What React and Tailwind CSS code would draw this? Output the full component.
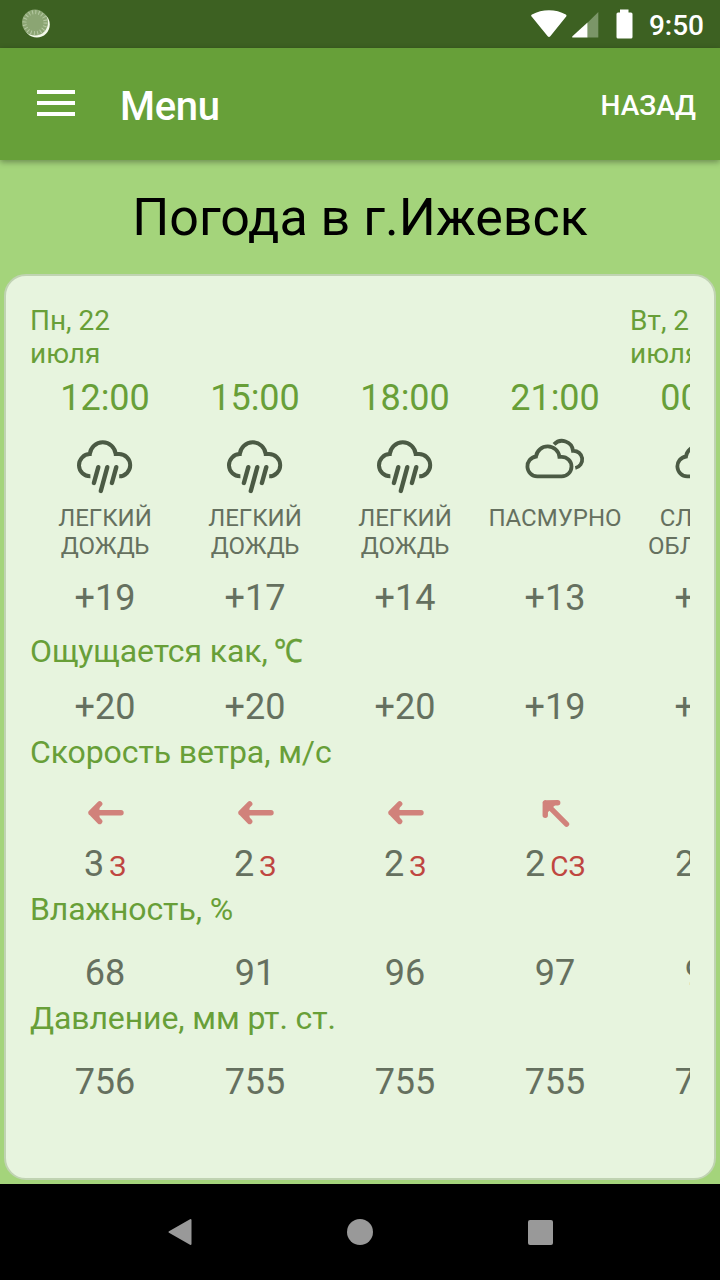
import React from "react";

const forecast = [
  { day: "Пн, 22 июля", time: "12:00", icon: "rain", desc: "ЛЕГКИЙ ДОЖДЬ", temp: "+19", feels: "+20", wind: 3, dir: "З", humidity: 68, pressure: 756 },
  { time: "15:00", icon: "rain", desc: "ЛЕГКИЙ ДОЖДЬ", temp: "+17", feels: "+20", wind: 2, dir: "З", humidity: 91, pressure: 755 },
  { time: "18:00", icon: "rain", desc: "ЛЕГКИЙ ДОЖДЬ", temp: "+14", feels: "+20", wind: 2, dir: "З", humidity: 96, pressure: 755 },
  { time: "21:00", icon: "clouds", desc: "ПАСМУРНО", temp: "+13", feels: "+19", wind: 2, dir: "СЗ", humidity: 97, pressure: 755 },
  { day: "Вт, 23 июля", time: "00:00", icon: "clouds", desc: "СЛЕГКА ОБЛАЧНО", temp: "+12", feels: "+18", wind: 2, dir: "СЗ", humidity: 97, pressure: 755 },
];

const RainIcon = () => (
  <svg width="64" height="64" viewBox="0 0 64 64" fill="none" stroke="#4b5a44" strokeWidth="4" strokeLinecap="round">
    <path strokeLinecap="butt" d="M17.4 42.3A11.1 11.1 0 0 1 16.8 20.1A13 13 0 0 1 42.7 20.1H46A11.1 11.1 0 0 1 46.2 42.3" />
    <path strokeWidth="4.4" d="M25.3 33.2L20.9 49M34.3 33.2L27.8 57M43.3 33.2L38.9 49" />
  </svg>
);

const CloudsIcon = () => (
  <svg width="64" height="64" viewBox="0 0 64 64" fill="none" stroke="#4b5a44" strokeWidth="3.8">
    <path d="M14.2 42.4A10 10 0 0 1 13 22.5A11.8 11.8 0 0 1 36.4 22.8H38.7A9.8 9.8 0 0 1 38.7 42.4Z" />
    <path d="M31 10.4A11 11 0 0 1 50 16.8A8.7 8.7 0 0 1 52.3 34" />
  </svg>
);

const WindArrow = ({ dir }) => (
  <svg
    width="40"
    height="40"
    viewBox="0 0 40 40"
    fill="none"
    stroke="#d1827b"
    strokeWidth="5.4"
    strokeLinecap="round"
    strokeLinejoin="round"
    className={dir === "СЗ" ? "rotate-45" : ""}
  >
    <path d="M36 19.7H6M14.7 10.9L6 19.7L14.7 28.5" />
    <path d="M7 19.7L14.5 12.5V27Z" fill="#d1827b" stroke="none" />
  </svg>
);

// One row of the table, a 150px cell for every forecast hour
const Row = ({ className, render }) => (
  <div className={`flex ${className}`}>
    {forecast.map((item) => (
      <div key={item.time} className="w-[150px] shrink-0 flex items-center justify-center">
        {render(item)}
      </div>
    ))}
  </div>
);

const Label = ({ children }) => (
  <div className="h-8 leading-8 text-[32px] tracking-[-0.1px] text-[#689f38] whitespace-nowrap">{children}</div>
);

const StatusBar = () => (
  <div className="h-12 bg-[#3d6122] flex items-center justify-between pl-[21px] pr-4">
    <svg width="30" height="30" viewBox="0 0 30 30">
      <circle cx="15.8" cy="15.6" r="13" fill="#f3f9ea" />
      <circle cx="14" cy="13.6" r="13" fill="#8ba573" />
      <circle cx="14" cy="13.6" r="10.5" fill="none" stroke="#b5c8a2" strokeWidth="4" strokeDasharray="1 2.3" />
    </svg>
    <div className="flex items-center">
      <svg width="36" height="28" viewBox="0 0 36 28" fill="#fff">
        <path d="M.8 6.8C-.1 6-.1 5.3 1 4.6C11-1.2 25-1.2 34.8 4.6C35.7 5.3 35.7 6 35 6.8L19.3 26.3Q18 27.8 16.7 26.3Z" />
      </svg>
      <svg width="27" height="27" viewBox="0 0 27 27" className="ml-[5px]">
        <path d="M26.3 1V26.5H15.5V11.8Z" fill="#7b9668" />
        <path d="M15.5 11.5V26.5H1.2Q-.6 26.5 .7 25Z" fill="#fff" />
      </svg>
      <svg width="17" height="30" viewBox="0 0 17 30" fill="#fff" className="ml-[17px] -mt-px">
        <path d="M4 .5H12.5V3.5H15Q16.5 3.5 16.5 5V28Q16.5 29.5 15 29.5H2Q.5 29.5 .5 28V5Q.5 3.5 2 3.5H4Z" />
      </svg>
      <span className="ml-4 mt-1 text-[28px] leading-8 font-medium text-white">9:50</span>
    </div>
  </div>
);

const AppBar = () => (
  <div className="h-28 bg-[#67a039] shadow-[0_2px_6px_rgba(0,0,0,0.35)] flex items-center pl-[37px] pr-6 text-white">
    <div className="flex flex-col gap-[7px] w-[38px] -mt-[2px]">
      <div className="h-1 bg-white" />
      <div className="h-1 bg-white" />
      <div className="h-1 bg-white" />
    </div>
    <span className="ml-[45px] mt-[6px] text-[40px] leading-none font-medium tracking-[-0.3px]">Menu</span>
    <span className="ml-auto mt-1 text-[28px] leading-none font-medium">НАЗАД</span>
  </div>
);

const NavBar = () => (
  <div className="h-24 bg-black flex items-center justify-between px-[166px]">
    <svg width="28" height="28" viewBox="0 0 28 28" fill="#999" stroke="#999" strokeWidth="2" strokeLinejoin="round">
      <path d="M3.5 14L24.5 2V26Z" />
    </svg>
    <div className="w-[26px] h-[26px] rounded-full bg-[#999]" />
    <div className="w-7 flex justify-center">
      <div className="w-[25px] h-[25px] rounded-xs bg-[#999]" />
    </div>
  </div>
);

const App = () => {
  return (
    <div className="w-[720px] h-[1280px] flex flex-col overflow-hidden bg-[#a4d47b] font-['Roboto',sans-serif] text-[#65705f]">
      <StatusBar />
      <AppBar />

      <h1 className="h-[114px] pt-[2px] flex items-center justify-center text-[52px] text-black">Погода в г.Ижевск</h1>

      {/* Forecast card, the hours run out past its right side */}
      <div className="mx-1 mb-1 flex-1 rounded-[22px] border-2 border-[#c0d3b2] bg-[#e7f4de] px-6 pt-7">
        <div className="overflow-hidden">
          <div className="flex h-[66px] text-[28px] leading-[33px] text-[#689f38]">
            {forecast.map((item) => (
              <div key={item.time} className="w-[150px] shrink-0">
                {item.day && <div className="w-[100px]">{item.day}</div>}
              </div>
            ))}
          </div>
          <Row className="h-14 text-4xl text-[#689f38]" render={(item) => item.time} />
          <Row className="h-[78px] pt-[2px]" render={(item) => (item.icon === "rain" ? <RainIcon /> : <CloudsIcon />)} />
          <Row
            className="h-14 text-2xl leading-7"
            render={(item) => (
              <div className="h-full w-[130px] flex flex-col items-center">
                {item.desc.split(" ").map((word) => (
                  <span key={word}>{word}</span>
                ))}
              </div>
            )}
          />
          <Row className="h-[75px] text-4xl" render={(item) => item.temp} />

          <Label>
            Ощущается как, <span className="inline-block origin-left scale-x-90 -ml-px [-webkit-text-stroke:0.4px_#689f38]">℃</span>
          </Label>
          <Row className="pt-[10px] h-[69px] text-4xl" render={(item) => item.feels} />

          <Label>Скорость ветра, м/с</Label>
          <Row className="mt-[25px] h-10" render={(item) => <WindArrow dir={item.dir} />} />
          <Row
            className="mt-[10px] h-[42px] text-4xl"
            render={(item) => (
              <div className="flex items-baseline gap-[5px]">
                <span>{item.wind}</span>
                <span className="text-[28px] text-[#bf4640]">{item.dir}</span>
              </div>
            )}
          />

          <div className="mt-2">
            <Label>Влажность, %</Label>
          </div>
          <Row className="mt-[21px] pt-[2px] h-[52px] text-4xl" render={(item) => item.humidity} />

          <div className="mt-1">
            <Label>Давление, мм рт. ст.</Label>
          </div>
          <Row className="mt-[21px] pt-[2px] h-[52px] text-4xl" render={(item) => item.pressure} />
        </div>
      </div>

      <NavBar />
    </div>
  );
};

export default App;
